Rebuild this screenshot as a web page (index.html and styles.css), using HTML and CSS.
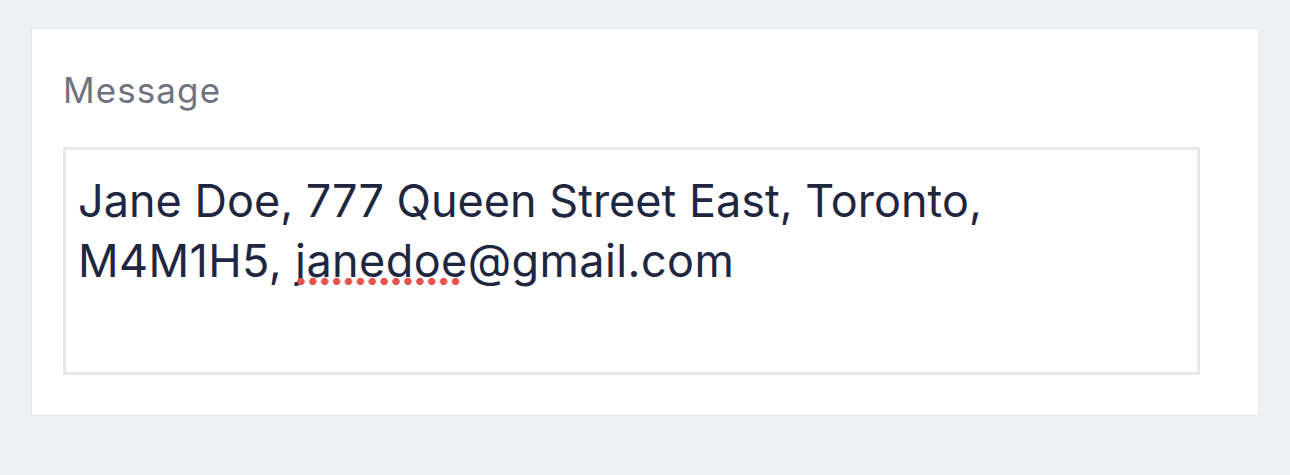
FILE: index.html
```html
<!DOCTYPE html>
<html>
<head>
<meta charset="utf-8">
<link rel="stylesheet" href="styles.css">
</head>
<body>
<div class="card">
  <div class="label">Message</div>
  <div class="field">
    <div class="text">Jane Doe, 777 Queen Street East, Toronto,<br><span class="line2">M4M1H5, <span class="spell">janedoe</span>@gmail.com</span></div>
  </div>
</div>
</body>
</html>
```
FILE: styles.css
```css
html, body {
  margin: 0;
  padding: 0;
  background: #eef1f4;
  width: 1290px;
  height: 475px;
  overflow: hidden;
}
body {
  padding: 28px 31px 0 31px;
  box-sizing: border-box;
  font-family: Inter, "Noto Sans", sans-serif;
}
.card {
  width: 1228px;
  height: 388px;
  box-sizing: border-box;
  background: #ffffff;
  border: 1px solid #e6e9ec;
  padding: 0 58px 0 31px;
}
.label {
  margin-top: 39px;
  font-size: 35px;
  line-height: 44px;
  color: #6f7380;
  letter-spacing: 1.1px;
}
.field {
  margin-top: 35px;
  height: 228px;
  box-sizing: border-box;
  border: 3px solid #e8e8e8;
  padding: 21px 12px;
}
.text {
  font-size: 45px;
  line-height: 60px;
  color: #1f2640;
}
.line2 {
  letter-spacing: 0.4px;
}
.spell {
  position: relative;
}
.spell::after {
  content: "";
  position: absolute;
  left: 0;
  bottom: 2px;
  width: 166.6px;
  height: 9px;
  background-image: radial-gradient(circle, #e5534b 3.4px, transparent 3.9px);
  background-size: 11.9px 9px;
  background-repeat: repeat-x;
}
```
